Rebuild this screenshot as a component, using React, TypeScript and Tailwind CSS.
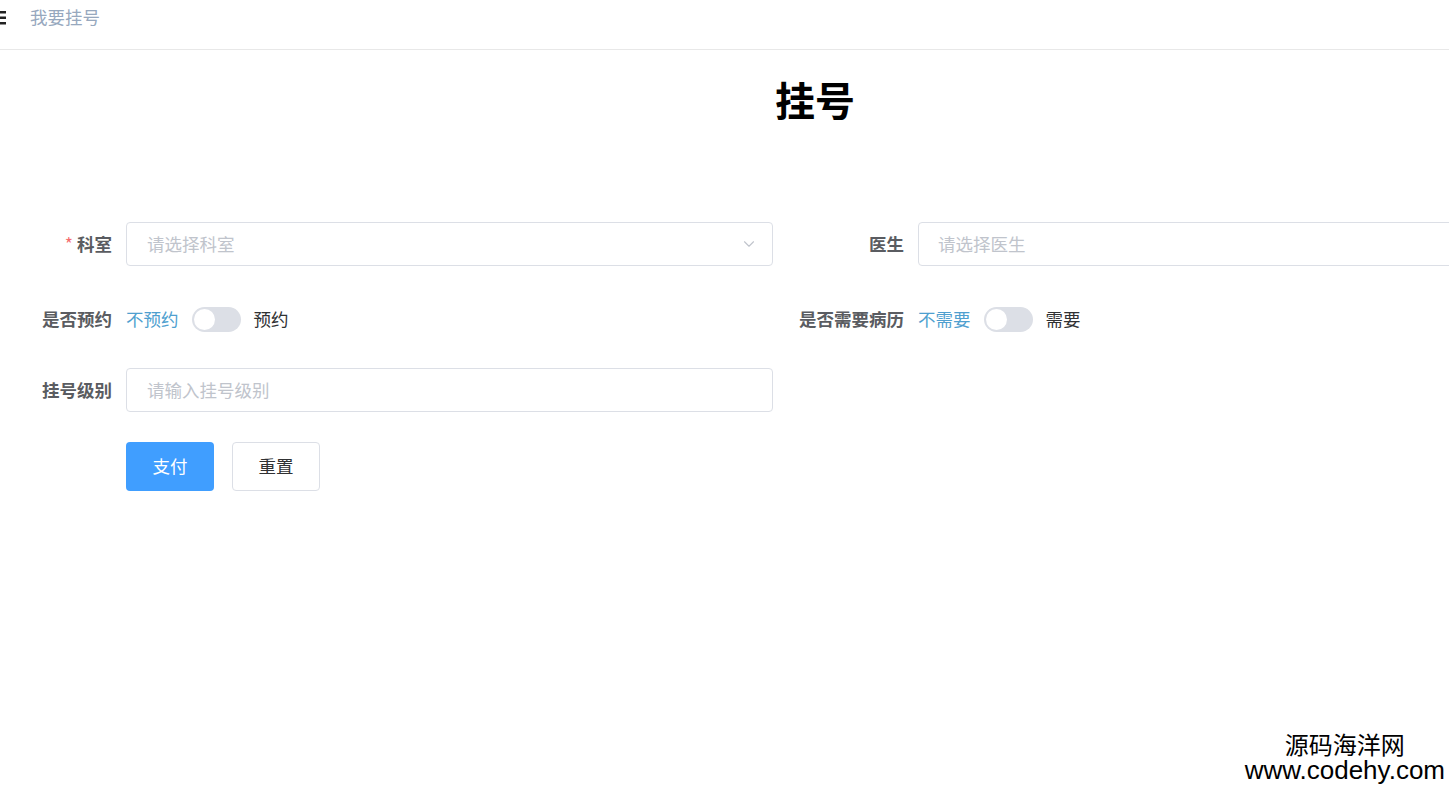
import { ChevronDown } from 'lucide-react';

const font = { fontFamily: '"Noto Sans CJK SC", "Liberation Sans", sans-serif' };

function Toggle() {
  return (
    <div className="w-[49px] h-[25px] rounded-full bg-[#dcdfe6] relative mx-[13px] shrink-0">
      <div className="absolute left-[2px] top-[2px] w-[21px] h-[21px] rounded-full bg-white" />
    </div>
  );
}

function Label({ text, required }: { text: string; required?: boolean }) {
  return (
    <div className="w-[126px] shrink-0 pr-[14px] text-right text-[17.5px] font-bold text-[#5a5c61]">
      {required && <span className="text-[#f56c6c] mr-[4px] font-normal">*</span>}
      {text}
    </div>
  );
}

export default function App() {
  return (
    <div className="w-[1449px] h-[787px] bg-white overflow-hidden relative" style={font}>
      <header className="h-[50px] border-b border-[#e8e8e8] flex items-center">
        <svg width="6" height="14" viewBox="0 0 6 14" className="mr-[24px] mb-[14px]">
          <rect x="0" y="0" width="6" height="2.5" fill="#222" />
          <rect x="0" y="5.5" width="6" height="2.5" fill="#222" />
          <rect x="0" y="11" width="6" height="2.5" fill="#222" />
        </svg>
        <span className="text-[17.5px] text-[#97a8be] mb-[15px]">我要挂号</span>
      </header>

      <h1 className="mt-[25px] pl-[775px] text-[40px] leading-[48px] font-bold text-black">挂号</h1>

      <div className="mt-[99px] flex flex-col">
        <div className="flex items-center h-[44px] mb-[31px]">
          <div className="flex items-center w-[792px] shrink-0">
            <Label text="科室" required />
            <div className="w-[647px] shrink-0 h-[44px] border border-[#dcdfe6] rounded-[4px] flex items-center justify-between pl-[20px] pr-[14px]">
              <span className="text-[17.5px] text-[#c0c4cc]">请选择科室</span>
              <ChevronDown className="w-[18px] h-[18px] text-[#c0c4cc]" strokeWidth={1.5} />
            </div>
          </div>
          <div className="flex items-center shrink-0">
            <Label text="医生" />
            <div className="w-[647px] shrink-0 h-[44px] border border-[#dcdfe6] rounded-[4px] flex items-center px-[19px]">
              <span className="text-[17.5px] text-[#c0c4cc]">请选择医生</span>
            </div>
          </div>
        </div>

        <div className="flex items-center h-[44px] mb-[27px]">
          <div className="flex items-center w-[792px] shrink-0">
            <Label text="是否预约" />
            <span className="text-[17.5px] text-[#4f9fcf]">不预约</span>
            <Toggle />
            <span className="text-[17.5px] text-[#303133]">预约</span>
          </div>
          <div className="flex items-center shrink-0">
            <Label text="是否需要病历" />
            <span className="text-[17.5px] text-[#4f9fcf]">不需要</span>
            <Toggle />
            <span className="text-[17.5px] text-[#303133]">需要</span>
          </div>
        </div>

        <div className="flex items-center h-[44px] mb-[30px]">
          <Label text="挂号级别" />
          <div className="w-[647px] h-[44px] border border-[#dcdfe6] rounded-[4px] flex items-center px-[20px]">
            <span className="text-[17.5px] text-[#c0c4cc]">请输入挂号级别</span>
          </div>
        </div>

        <div className="flex items-center pl-[126px] gap-[18px]">
          <button className="w-[88px] h-[49px] rounded-[4px] bg-[#409eff] text-white text-[17.5px]">支付</button>
          <button className="w-[88px] h-[49px] rounded-[4px] border border-[#dcdfe6] bg-white text-[#303133] text-[17.5px]">重置</button>
        </div>
      </div>

      <div className="absolute right-[4px] bottom-[5px] flex flex-col items-center gap-[2px] text-black">
        <span className="text-[24px] leading-[24px]" style={{ fontFamily: '"Noto Sans CJK SC", sans-serif' }}>源码海洋网</span>
        <span className="text-[26px] leading-[24px]" style={{ fontFamily: '"Liberation Sans", sans-serif' }}>www.codehy.com</span>
      </div>
    </div>
  );
}
